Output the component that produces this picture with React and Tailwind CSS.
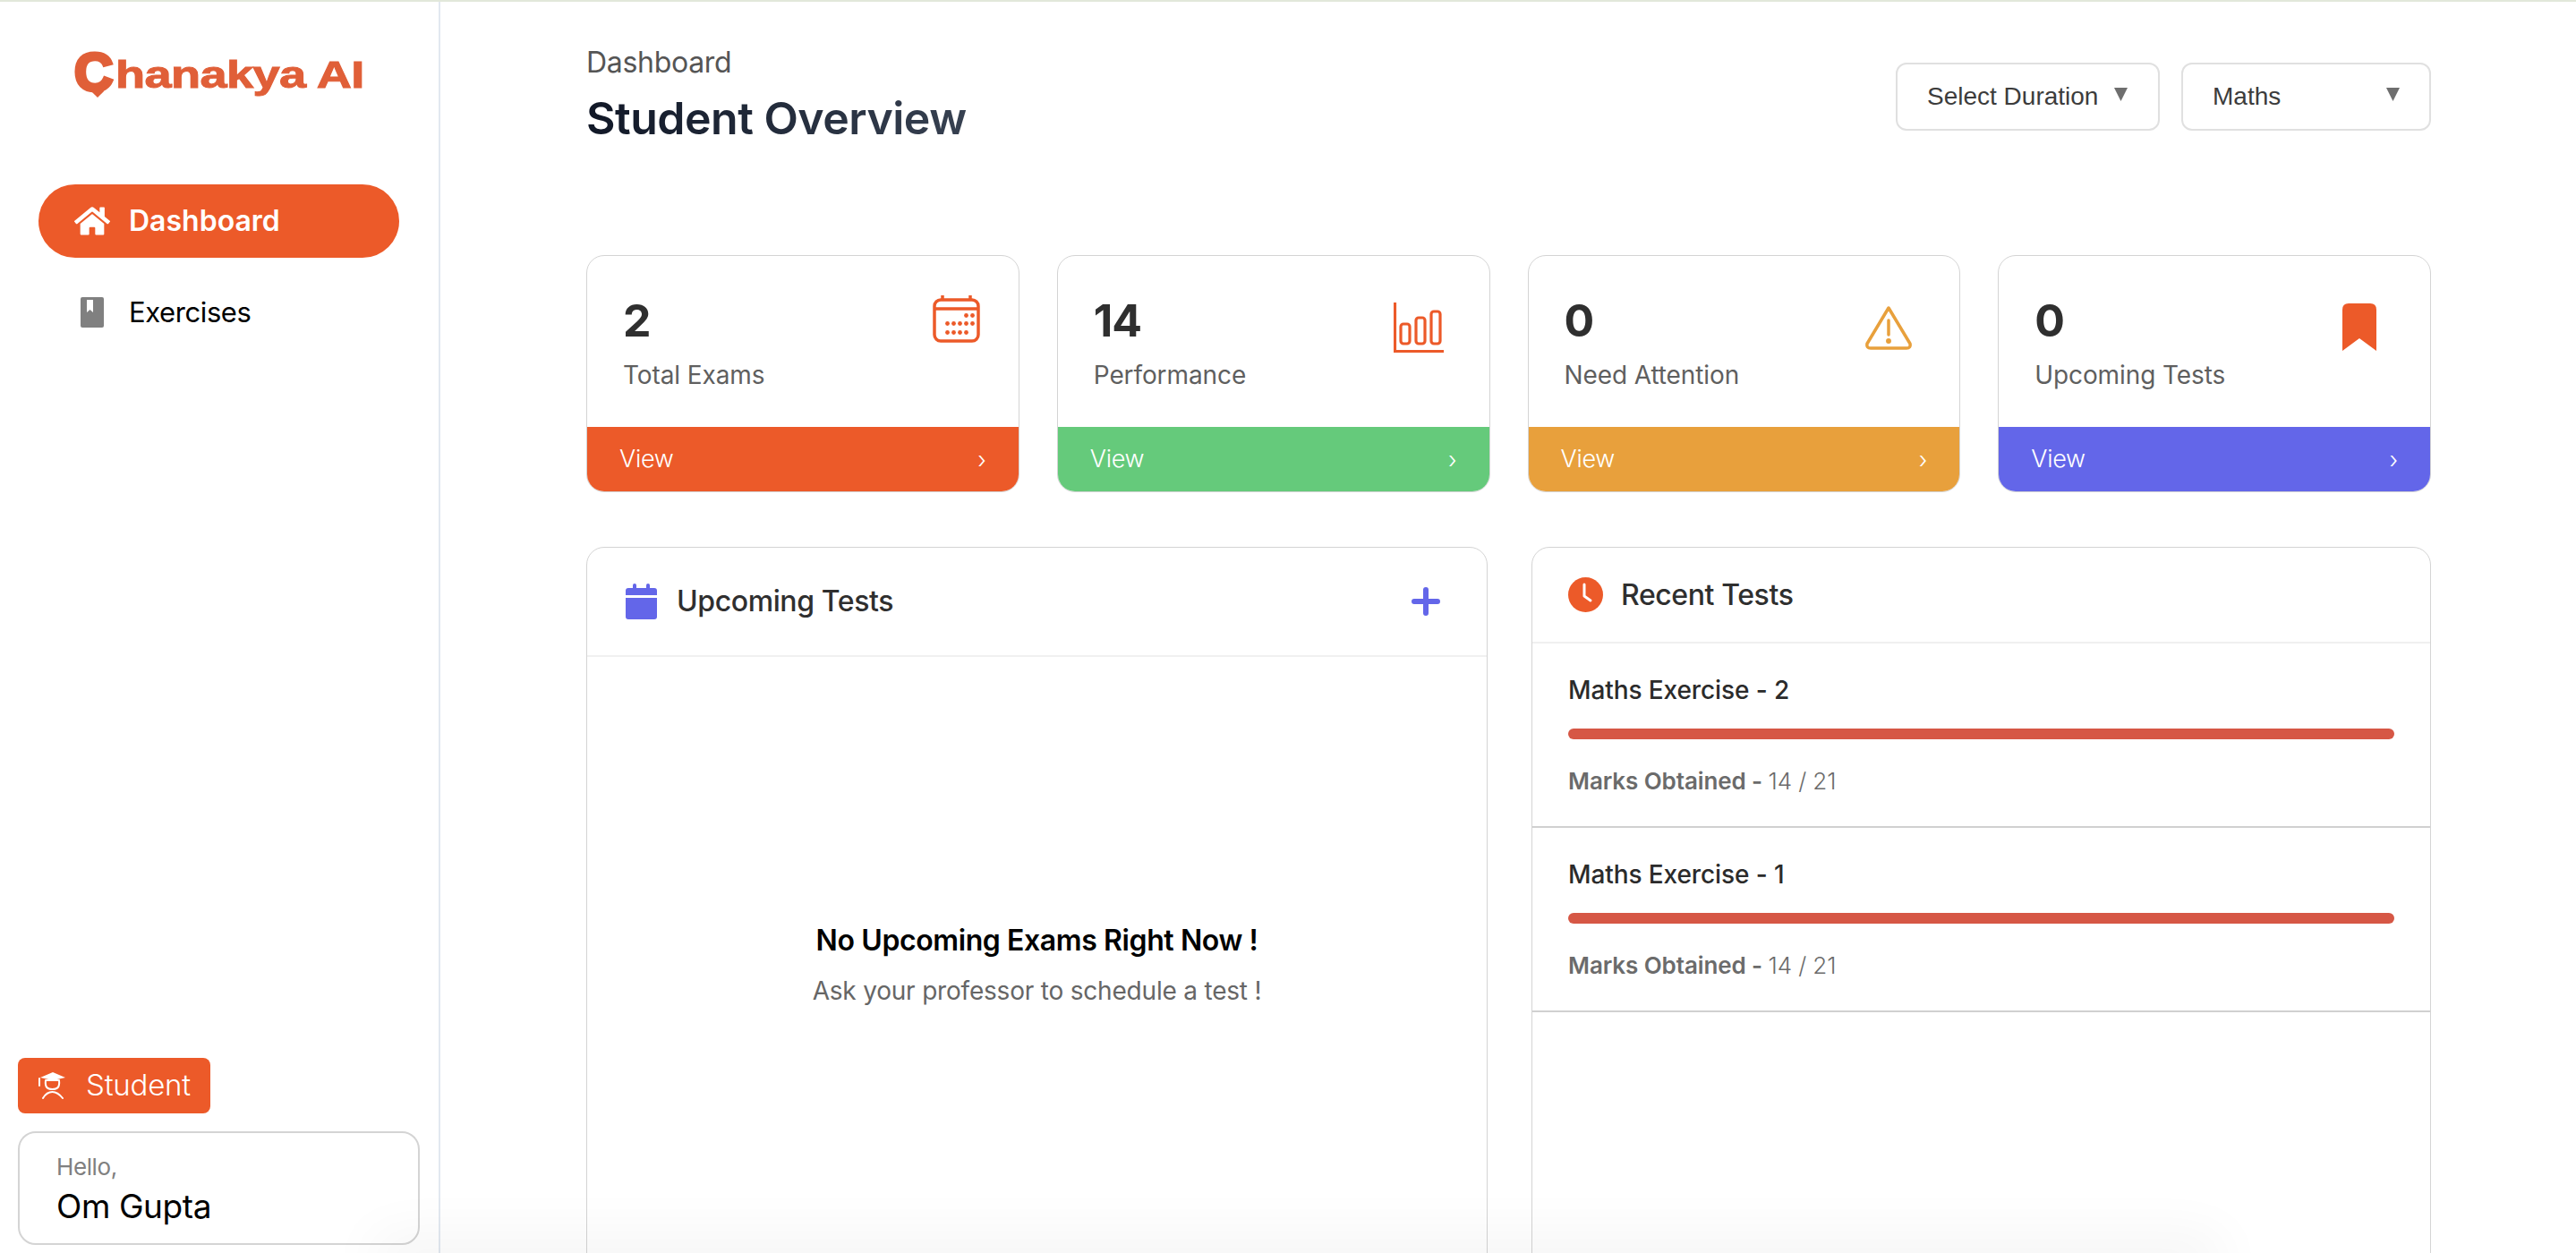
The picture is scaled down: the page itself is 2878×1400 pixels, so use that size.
import React from "react";
import { FaHome } from "react-icons/fa";

const font = "font-['Inter','Noto_Sans',sans-serif]";

function CalendarOutline() {
  const dots = [[37,22],[44,22],[16,31],[23,31],[30,31],[37,31],[44,31],[16,41],[23,41],[30,41],[37,41]];
  return (
    <svg width="53" height="53" viewBox="0 0 53 53" fill="none" stroke="#ec5a29" strokeWidth="3.5">
      <rect x="2" y="5" width="49" height="46" rx="7" />
      <path d="M2 15H51M11 0V5M42 0V5" />
      {dots.map(([x, y]) => <circle key={`${x}-${y}`} cx={x + 0.5} cy={y + 0.5} r="2.4" fill="#ec5a29" stroke="none" />)}
    </svg>
  );
}
function BarsOutline() {
  return (
    <svg width="56" height="56" viewBox="0 0 56 56" fill="none" stroke="#ec5a29" strokeWidth="3.2">
      <path d="M1.5 0V54.5H56" />
      <rect x="8" y="24" width="10" height="22" rx="3" />
      <rect x="25" y="17" width="10" height="29" rx="3" />
      <rect x="42" y="10" width="10" height="36" rx="3" />
    </svg>
  );
}
function WarnOutline() {
  return (
    <svg width="52" height="49" viewBox="0 0 52 49" fill="none" stroke="#e8a03c" strokeWidth="3.5" strokeLinejoin="round" strokeLinecap="round">
      <path d="M26 2 L50 42 Q51 47 46 47 H6 Q1 47 2 42 Z" />
      <path d="M26 16V32" />
      <circle cx="26" cy="39" r="1.2" fill="#e8a03c" />
    </svg>
  );
}
function BookmarkSolid() {
  return (
    <svg width="38" height="53" viewBox="0 0 38 53">
      <path d="M0 7Q0 0 7 0H31Q38 0 38 7V53L19 39L0 53Z" fill="#ec5a29" />
    </svg>
  );
}
function CalendarSolid() {
  return (
    <svg width="35" height="40" viewBox="0 0 35 40" fill="#6366e9">
      <rect x="8" y="0" width="4" height="8" rx="2" />
      <rect x="23" y="0" width="4" height="8" rx="2" />
      <path d="M3 5H32Q35 5 35 8V13H0V8Q0 5 3 5Z" />
      <path d="M0 16H35V37Q35 40 32 40H3Q0 40 0 37Z" />
    </svg>
  );
}
function ClockSolid() {
  return (
    <svg width="39" height="39" viewBox="0 0 39 39">
      <circle cx="19.5" cy="19.5" r="19.5" fill="#ec5a29" />
      <path d="M18 8V21L25 26" fill="none" stroke="#fff" strokeWidth="3" strokeLinecap="round" strokeLinejoin="round" />
    </svg>
  );
}
function Book() {
  return (
    <svg width="26" height="34" viewBox="0 0 26 34">
      <path d="M2 0H24Q26 0 26 2V32Q26 34 24 34H2Q0 34 0 32V2Q0 0 2 0Z" fill="#808080" />
      <path d="M7 3H14V17L10.5 14L7 17Z" fill="#fff" />
    </svg>
  );
}
function Student() {
  return (
    <svg width="31" height="30" viewBox="0 0 31 30" fill="none" stroke="#fff" strokeWidth="2" strokeLinecap="round">
      <path d="M16 0L30 6L16 9L2 6Z" fill="#fff" stroke="none" />
      <path d="M1 7V15M8 9C7 17 10 19 15.5 19C21 19 24 17 23 9" />
      <path d="M9 9H22" />
      <path d="M5 29C8 24 11 22 15.5 22C20 22 23 24 27 29" />
    </svg>
  );
}

function StatCard({ value, label, Icon, color, iconBox }) {
  return (
    <div className="flex h-[265px] flex-col overflow-hidden rounded-[20px] border border-[#d4d4d4] bg-white">
      <div className="relative flex-1 pl-[40px] pt-[37px]">
        <div className="text-[50px] leading-[70px] font-bold tracking-[-1px] text-[#2f2f2f]">{value}</div>
        <div className="mt-[8px] text-[28px] leading-[36px] text-[#5f5f5f] tracking-[-0.1px]">{label}</div>
        <div className={iconBox}><Icon /></div>
      </div>
      <div className={`flex h-[72px] items-center justify-between pl-[36px] pr-[36px] text-white ${color}`}>
        <span className="text-[27px] font-light tracking-[-0.3px]">View</span>
        <span className="text-[26px] font-light">›</span>
      </div>
    </div>
  );
}

function TestRow({ title }) {
  return (
    <div className="h-[206px] border-b-2 border-[#d0d0d0] px-[40px] pt-[33px]">
      <div className="text-[28px] leading-[38px] font-medium tracking-[-0.1px] text-[#2b2b2b]">{title}</div>
      <div className="mt-[24px] h-[12px] rounded-full bg-[#d65745]" />
      <div className="mt-[30px] text-[26px] leading-[34px] tracking-[-0.1px] text-[#6b6b6b]">
        <span className="font-semibold">Marks Obtained - </span>
        <span className="font-light">14 / 21</span>
      </div>
    </div>
  );
}

function Select({ label, width, arrowGap }) {
  return (
    <div className={`flex h-[76px] items-center rounded-[12px] border-2 border-[#e0e0e0] bg-white pl-[33px] font-['Liberation_Sans',Arial,sans-serif] text-[28px] text-[#3c3c3c] ${width}`}>
      <span className={arrowGap}>{label}</span>
      <svg width="15" height="15" viewBox="0 0 15 15" className="mb-[6px]"><path d="M0 0H15L7.5 15Z" fill="#6e6e6e" /></svg>
    </div>
  );
}

export default function App() {
  return (
    <div className={`relative h-[1400px] w-[2878px] overflow-hidden bg-white ${font}`}>
      <div className="h-[2px] bg-[#e2e8da]" />
      <div className="flex h-[1398px]">
        <aside className="flex h-full w-[492px] shrink-0 flex-col border-r-2 border-[#e2e8f0]">
          <div className="relative mt-[46px] flex h-[60px] items-baseline pl-[83px] font-['Liberation_Sans',Arial,sans-serif] font-bold text-[#e05f38]">
            <span className="inline-block w-[46px] translate-y-[3px] text-[60px] leading-[60px] [-webkit-text-stroke:4px_#e05f38]">C</span>
            <span className="inline-block origin-left scale-x-[1.26] text-[43px] leading-[60px] tracking-[-0.5px] [-webkit-text-stroke:1px_#e05f38]">hanakya AI</span>
            <div className="absolute left-[104px] top-[49px] h-[10px] w-[10px] rotate-45 bg-[#e05f38]" />
          </div>
          <nav className="mt-[98px]">
            <div className="ml-[43px] flex h-[82px] w-[403px] items-center rounded-full bg-[#ec5a29] pl-[40px] text-white">
              <FaHome className="h-[40px] w-[40px]" />
              <span className="ml-[21px] text-[32px] font-semibold">Dashboard</span>
            </div>
            <div className="ml-[43px] mt-[20px] flex h-[82px] w-[403px] items-center pl-[47px] text-black">
              <Book />
              <span className="ml-[28px] text-[31px] tracking-[-0.4px]">Exercises</span>
            </div>
          </nav>
          <div className="mt-auto mb-[9px] ml-[20px]">
            <div className="flex h-[62px] w-[215px] items-center rounded-[8px] bg-[#ec5a29] pl-[23px] text-white">
              <Student />
              <span className="ml-[22px] text-[33px] font-light tracking-[-0.2px]">Student</span>
            </div>
            <div className="mt-[20px] flex h-[127px] w-[449px] flex-col justify-center rounded-[20px] border-2 border-[#d4d4d4] pl-[41px]">
              <div className="text-[26px] leading-[36px] tracking-[-0.4px] text-[#808080]">Hello,</div>
              <div className="mt-[4px] text-[37px] leading-[44px] tracking-[-0.4px] text-black">Om Gupta</div>
            </div>
          </div>
        </aside>

        <main className="flex-1 overflow-hidden pl-[163px] pr-[162px]">
          <header className="flex h-[283px] items-start justify-between">
            <div className="pt-[48px]">
              <div className="text-[32px] leading-[40px] tracking-[-0.3px] text-[#555555]">Dashboard</div>
              <div className="mt-[12px] bg-gradient-to-r from-[#111827] to-[#374151] bg-clip-text text-[50px] leading-[60px] font-semibold tracking-[-0.5px] text-transparent">Student Overview</div>
            </div>
            <div className="mt-[68px] flex gap-[24px]">
              <Select label="Select Duration" width="w-[295px]" arrowGap="mr-[18px]" />
              <Select label="Maths" width="w-[279px]" arrowGap="mr-[118px]" />
            </div>
          </header>

          <section className="grid grid-cols-4 gap-[42px]">
            <StatCard value="2" label="Total Exams" Icon={CalendarOutline} color="bg-[#ec5a29]" iconBox="absolute right-[43px] top-[44px]" />
            <StatCard value="14" label="Performance" Icon={BarsOutline} color="bg-[#65ca7b]" iconBox="absolute right-[51px] top-[52px]" />
            <StatCard value="0" label="Need Attention" Icon={WarnOutline} color="bg-[#e8a03c]" iconBox="absolute right-[53px] top-[56px]" />
            <StatCard value="0" label="Upcoming Tests" Icon={BookmarkSolid} color="bg-[#6366e9]" iconBox="absolute right-[60px] top-[53px]" />
          </section>

          <section className="mt-[61px] flex gap-[49px]">
            <div className="h-[900px] w-[1007px] rounded-[20px] border border-[#d4d4d4]">
              <div className="flex h-[122px] items-center border-b-2 border-[#f0f0f0] pl-[43px] pr-[52px]">
                <CalendarSolid />
                <span className="ml-[22px] text-[32px] font-medium tracking-[-0.4px] text-[#2f2f2f]">Upcoming Tests</span>
                <svg width="32" height="32" viewBox="0 0 32 32" className="ml-auto" fill="none" stroke="#6366e9" strokeWidth="6" strokeLinecap="round"><path d="M16 3V29M3 16H29" /></svg>
              </div>
              <div className="flex flex-col items-center pt-[297px]">
                <div className="text-[32px] leading-[40px] font-semibold tracking-[-0.4px] text-black">No Upcoming Exams Right Now !</div>
                <div className="mt-[18px] text-[28px] leading-[36px] tracking-[-0.2px] text-[#666666]">Ask your professor to schedule a test !</div>
              </div>
            </div>

            <div className="h-[900px] flex-1 rounded-[20px] border border-[#d4d4d4]">
              <div className="flex h-[107px] items-center border-b-2 border-[#f0f0f0] pl-[40px]">
                <ClockSolid />
                <span className="ml-[20px] text-[32px] font-medium tracking-[-0.4px] text-[#2f2f2f]">Recent Tests</span>
              </div>
              <TestRow title="Maths Exercise - 2" />
              <TestRow title="Maths Exercise - 1" />
            </div>
          </section>
        </main>
      </div>
      <div className="pointer-events-none absolute bottom-[-12px] left-[440px] h-[10px] w-[2020px] rounded-full shadow-[0_0_60px_24px_rgba(0,0,0,0.045)]" />
    </div>
  );
}
